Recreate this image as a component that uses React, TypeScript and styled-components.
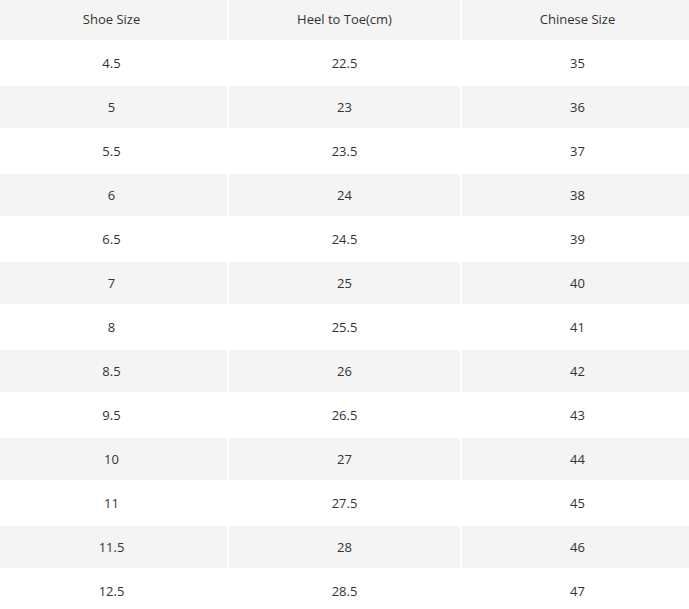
import React from "react";
import styled, { createGlobalStyle } from "styled-components";

const Global = createGlobalStyle`
  html, body { margin: 0; padding: 0; background: #fff; overflow: hidden; }
  body { font-family: "Open Sans", "Liberation Sans", sans-serif; }
`;

const Table = styled.div`
  display: grid;
  grid-template-columns: 231px 231px 231px;
  grid-auto-rows: 42px;
  gap: 2px;
  margin: -2px 0 0 -4px;
  width: 697px;
`;

const Cell = styled.div<{ $shade: boolean }>`
  display: flex;
  align-items: center;
  justify-content: center;
  background: ${(p) => (p.$shade ? "#f4f4f4" : "#ffffff")};
  color: #333;
  font-size: 13px;
`;

const rows: [string, string, string][] = [
  ["4.5", "22.5", "35"],
  ["5", "23", "36"],
  ["5.5", "23.5", "37"],
  ["6", "24", "38"],
  ["6.5", "24.5", "39"],
  ["7", "25", "40"],
  ["8", "25.5", "41"],
  ["8.5", "26", "42"],
  ["9.5", "26.5", "43"],
  ["10", "27", "44"],
  ["11", "27.5", "45"],
  ["11.5", "28", "46"],
  ["12.5", "28.5", "47"],
];

export default function App() {
  const header = ["Shoe Size", "Heel to Toe(cm)", "Chinese Size"];
  return (
    <>
      <Global />
      <Table>
        {header.map((h) => (
          <Cell key={h} $shade>
            {h}
          </Cell>
        ))}
        {rows.map((r, i) =>
          r.map((v, j) => (
            <Cell key={`${i}-${j}`} $shade={i % 2 === 1}>
              {v}
            </Cell>
          ))
        )}
      </Table>
    </>
  );
}
